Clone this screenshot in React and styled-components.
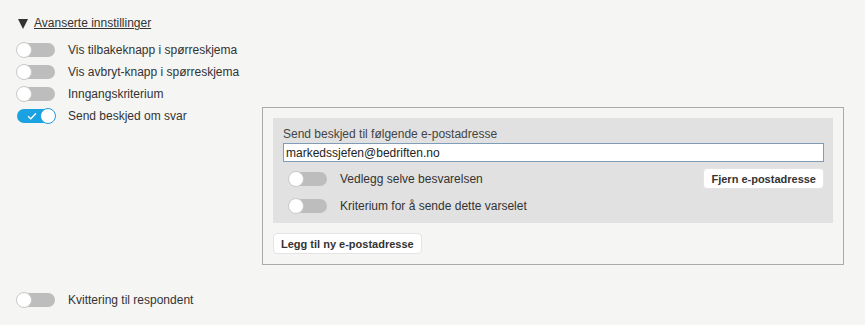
import React from "react";
import styled, { createGlobalStyle } from "styled-components";

const GlobalStyle = createGlobalStyle`
  html, body {
    margin: 0;
    background: #f5f5f3;
  }
  body {
    font-family: "Liberation Sans", Arial, sans-serif;
    font-size: 12px;
    color: #333;
  }
`;

const Page = styled.div`
  width: 865px;
  height: 325px;
  padding: 14px 0 0 17px;
  box-sizing: border-box;
`;

const Heading = styled.div`
  display: flex;
  align-items: center;
  height: 18px;
  margin-bottom: 7px;
`;

const Caret = styled.span`
  width: 0;
  height: 0;
  border-left: 5px solid transparent;
  border-right: 5px solid transparent;
  border-top: 10px solid #333;
  margin: 2px 6px 0 1px;
`;

const HeadingLink = styled.a`
  color: #333;
  text-decoration: underline;
  cursor: pointer;
`;

const Row = styled.div`
  display: flex;
  align-items: center;
  height: 22px;
  margin-top: ${(p) => p.$top || 0}px;
`;

const Label = styled.span`
  margin-left: 13px;
  line-height: 1;
`;

const Track = styled.span`
  position: relative;
  display: inline-block;
  width: 38px;
  height: 14px;
  border-radius: 8px;
  background: ${(p) => (p.$on ? "#1aa1e1" : "#bdbdbd")};
  flex-shrink: 0;
`;

const Knob = styled.span`
  position: absolute;
  top: -1px;
  left: ${(p) => (p.$on ? "23px" : "-1px")};
  width: 14px;
  height: 14px;
  border-radius: 50%;
  background: #fff;
  border: 1px solid ${(p) => (p.$on ? "#1aa1e1" : "#c9c9c9")};
`;

const Check = styled.svg`
  position: absolute;
  left: 10px;
  top: 3px;
`;

const Toggle = ({ on }) => (
  <Track $on={on}>
    {on && (
      <Check width="10" height="8" viewBox="0 0 10 8">
        <path d="M1 4.2 L3.8 6.8 L9 1.2" fill="none" stroke="#fff" strokeWidth="1.3" />
      </Check>
    )}
    <Knob $on={on} />
  </Track>
);

const NotifyRow = styled.div`
  display: flex;
  align-items: flex-start;
`;

const NotifyLeft = styled.div`
  width: 245px;
`;

const Box = styled.div`
  width: 582px;
  margin-top: 2px;
  border: 1px solid #aaa;
  padding: 10px;
  box-sizing: border-box;
`;

const Panel = styled.div`
  background: #e1e1e1;
  padding: 9px 9px 6px 10px;
`;

const FieldLabel = styled.div`
  color: #444;
  line-height: 15px;
  margin-bottom: 1px;
`;

const Input = styled.input`
  display: block;
  width: 541px;
  height: 19px;
  box-sizing: border-box;
  border: 1px solid #7f9db9;
  background: #fff;
  padding: 0 2px;
  font-family: "Liberation Sans", Arial, sans-serif;
  font-size: 12px;
  color: #222;
  outline: none;
`;

const Options = styled.div`
  display: flex;
  justify-content: space-between;
  margin-top: 6px;
`;

const OptionList = styled.div`
  display: flex;
  flex-direction: column;
  gap: 5px;
  padding-left: 6px;
`;

const Button = styled.button`
  height: 21px;
  padding: 0 7px;
  background: #fff;
  border: 1px solid #e4e4e4;
  border-radius: 4px;
  font-family: "Liberation Sans", Arial, sans-serif;
  font-size: 11px;
  font-weight: bold;
  color: #333;
  cursor: pointer;
`;

const FooterButton = styled(Button)`
  margin-top: 10px;
`;

const App = () => (
  <Page>
    <GlobalStyle />
    <Heading>
      <Caret />
      <HeadingLink>Avanserte innstillinger</HeadingLink>
    </Heading>
    <Row>
      <Toggle />
      <Label>Vis tilbakeknapp i spørreskjema</Label>
    </Row>
    <Row>
      <Toggle />
      <Label>Vis avbryt-knapp i spørreskjema</Label>
    </Row>
    <Row>
      <Toggle />
      <Label>Inngangskriterium</Label>
    </Row>
    <NotifyRow>
      <NotifyLeft>
        <Row>
          <Toggle on />
          <Label>Send beskjed om svar</Label>
        </Row>
      </NotifyLeft>
      <Box>
        <Panel>
          <FieldLabel>Send beskjed til følgende e-postadresse</FieldLabel>
          <Input defaultValue="markedssjefen@bedriften.no" />
          <Options>
            <OptionList>
              <Row>
                <Toggle />
                <Label>Vedlegg selve besvarelsen</Label>
              </Row>
              <Row>
                <Toggle />
                <Label>Kriterium for å sende dette varselet</Label>
              </Row>
            </OptionList>
            <Button>Fjern e-postadresse</Button>
          </Options>
        </Panel>
        <FooterButton>Legg til ny e-postadresse</FooterButton>
      </Box>
    </NotifyRow>
    <Row $top={24}>
      <Toggle />
      <Label>Kvittering til respondent</Label>
    </Row>
  </Page>
);

export default App;
